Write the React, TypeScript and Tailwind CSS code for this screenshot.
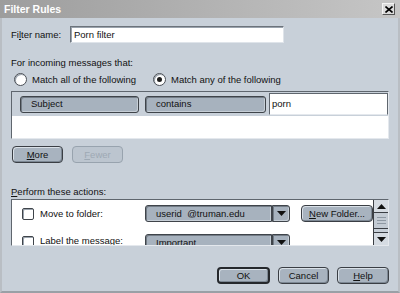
import React from "react";

const font = { fontFamily: '"Liberation Sans", Arial, sans-serif' };

function Btn({
  children,
  className = "",
  disabled = false,
  primary = false,
}: {
  children: React.ReactNode;
  className?: string;
  disabled?: boolean;
  primary?: boolean;
}) {
  const tone = disabled
    ? "border-[#98a3ae] text-[#9ea9b4] bg-[#bcc5cf]"
    : primary
    ? "border-2 border-[#25282c] text-[#111] bg-[#a8b3bf] shadow-[inset_1px_1px_0_#d9e0e7,inset_-1px_-1px_0_#7d8894]"
    : "border-[#3a3e44] text-[#111] bg-[#a8b3bf] shadow-[inset_1px_1px_0_#d9e0e7,inset_-1px_-1px_0_#7d8894]";
  return (
    <div
      className={`flex h-[17px] items-center justify-center rounded-[4px] border ${tone} ${className}`}
    >
      {children}
    </div>
  );
}

function Field({ children, className = "" }: { children: React.ReactNode; className?: string }) {
  return (
    <div
      className={`flex h-[17px] items-center rounded-[3px] border border-[#3f444a] bg-[#a7b2be] pl-[10px] text-[#111] shadow-[inset_1px_1px_0_#737c86,inset_-1px_-1px_0_#c6ced6] ${className}`}
    >
      {children}
    </div>
  );
}

function Radio({ checked }: { checked?: boolean }) {
  return (
    <div className="flex h-[13px] w-[13px] items-center justify-center rounded-full border border-[#4a4f56] bg-white shadow-[inset_1px_1px_0_#9aa3ad]">
      {checked && <div className="h-[5px] w-[5px] rounded-full bg-[#1c1c1c]" />}
    </div>
  );
}

function Check() {
  return (
    <div className="h-[12px] w-[12px] rounded-[2px] border border-[#3f444a] bg-white shadow-[inset_1px_1px_0_#9aa3ad]" />
  );
}

function Arrow({ up }: { up?: boolean }) {
  return (
    <svg width="9" height="5" viewBox="0 0 9 5">
      <path d={up ? "M0 5 L4.5 0 L9 5 Z" : "M0 0 L9 0 L4.5 5 Z"} fill="#111" />
    </svg>
  );
}

export default function App() {
  return (
    <div className="flex h-[293px] w-[400px] flex-col overflow-hidden bg-[#c8d0d9] text-[9.5px] leading-[12px] text-[#111]" style={font}>
      {/* title bar */}
      <div className="flex h-[18px] shrink-0 items-center justify-between bg-gradient-to-r from-[#9d9d9d] to-[#c6c6c6] pl-[4px] pr-[5px]">
        <span className="text-[10.5px] font-bold text-white">Filter Rules</span>
        <div className="flex h-[12px] w-[13px] items-center justify-center border border-[#f4f4f4] border-b-[#555] border-r-[#555] bg-[#dcdcdc]">
          <svg width="8" height="7" viewBox="0 0 8 7">
            <path d="M0.5 0.5 L7.5 6.5 M7.5 0.5 L0.5 6.5" stroke="#000" strokeWidth="1.6" />
          </svg>
        </div>
      </div>

      <div className="flex flex-1 flex-col border-x-2 border-b-2 border-x-[#b9bec4] border-b-[#9aa0a6] pl-[9px] pr-[9px]">
        {/* filter name */}
        <div className="mt-[8px] flex items-center">
          <span className="w-[59px]">
            Fi<span className="underline">l</span>ter name:
          </span>
          <div className="flex h-[17px] w-[214px] items-center border border-[#6c737b] border-b-[#dfe4ea] border-r-[#dfe4ea] bg-white pl-[3px] shadow-[inset_1px_1px_0_#9aa3ad]">
            Porn filter
          </div>
        </div>

        <div className="mt-[14px]">For incoming messages that:</div>

        <div className="mt-[4px] flex items-center pl-[3px]">
          <Radio />
          <span className="ml-[5px] w-[121px]">Match all of the following</span>
          <Radio checked />
          <span className="ml-[5px]">Match any of the following</span>
        </div>

        {/* rules box */}
        <div className="mt-[5px] flex h-[48px] flex-col border border-[#5f666e] border-b-[#e4e8ed] border-r-[#e4e8ed]">
          <div className="flex h-[24px] items-center pl-[8px]">
            <Field className="w-[119px]">Subject</Field>
            <Field className="ml-[6px] w-[121px]">contains</Field>
            <div className="ml-[3px] flex h-[22px] flex-1 items-center border border-[#5f666e] border-b-[#e4e8ed] bg-white pl-[2px]">
              porn
            </div>
          </div>
          <div className="flex-1 bg-white" />
        </div>

        <div className="mt-[7px] flex">
          <Btn className="ml-[1px] w-[51px]">
            <span className="underline">M</span>ore
          </Btn>
          <Btn disabled className="ml-[9px] w-[51px]">
            <span className="underline">F</span>ewer
          </Btn>
        </div>

        <div className="mt-[23px]">
          <span className="underline">P</span>erform these actions:
        </div>

        {/* actions box */}
        <div className="mt-[1px] flex h-[47px] overflow-hidden border border-[#5f666e] border-b-[#e4e8ed] border-r-[#e4e8ed] bg-white">
          <div className="flex flex-1 flex-col pl-[10px]">
            <div className="mt-[5px] flex items-center">
              <Check />
              <span className="ml-[6px] w-[105px]">Move to folder:</span>
              <div className="flex">
                <Field className="w-[127px] rounded-r-none">userid&nbsp;&nbsp;@truman.edu</Field>
                <Field className="w-[18px] justify-center rounded-l-none !pl-0">
                  <Arrow />
                </Field>
              </div>
              <Btn className="ml-[11px] w-[72px]">
                <span className="underline">N</span>ew Folder...
              </Btn>
            </div>
            <div className="mt-[12px] flex items-start">
              <div className="mt-[2px]">
                <Check />
              </div>
              <span className="ml-[6px] mt-[1px] w-[105px]">Label the message:</span>
              <div className="flex">
                <Field className="w-[127px] rounded-r-none">Important</Field>
                <Field className="w-[18px] justify-center rounded-l-none !pl-0">
                  <Arrow />
                </Field>
              </div>
            </div>
          </div>
          {/* scrollbar */}
          <div className="flex w-[15px] flex-col border-l border-[#3a3e44] bg-[#c8d0d9]">
            <div className="flex h-[13px] items-center justify-center border-b border-[#3a3e44] bg-[#d5dbe2]">
              <Arrow up />
            </div>
            <div className="flex h-[16px] flex-col items-center justify-center gap-[2px] border-b border-[#3a3e44] bg-[#c3cbd4]">
              <div className="h-px w-[9px] bg-[#8e98a3]" />
              <div className="h-px w-[9px] bg-[#8e98a3]" />
              <div className="h-px w-[9px] bg-[#8e98a3]" />
            </div>
            <div className="flex-1" />
            <div className="flex h-[13px] items-center justify-center border-t border-[#3a3e44] bg-[#d5dbe2]">
              <Arrow />
            </div>
          </div>
        </div>

        {/* dialog buttons */}
        <div className="mt-[21px] flex justify-end">
          <Btn primary className="w-[53px]">OK</Btn>
          <Btn className="ml-[8px] w-[51px]">Cancel</Btn>
          <Btn className="ml-[8px] w-[52px]">
            <span className="underline">H</span>elp
          </Btn>
        </div>
      </div>
    </div>
  );
}
